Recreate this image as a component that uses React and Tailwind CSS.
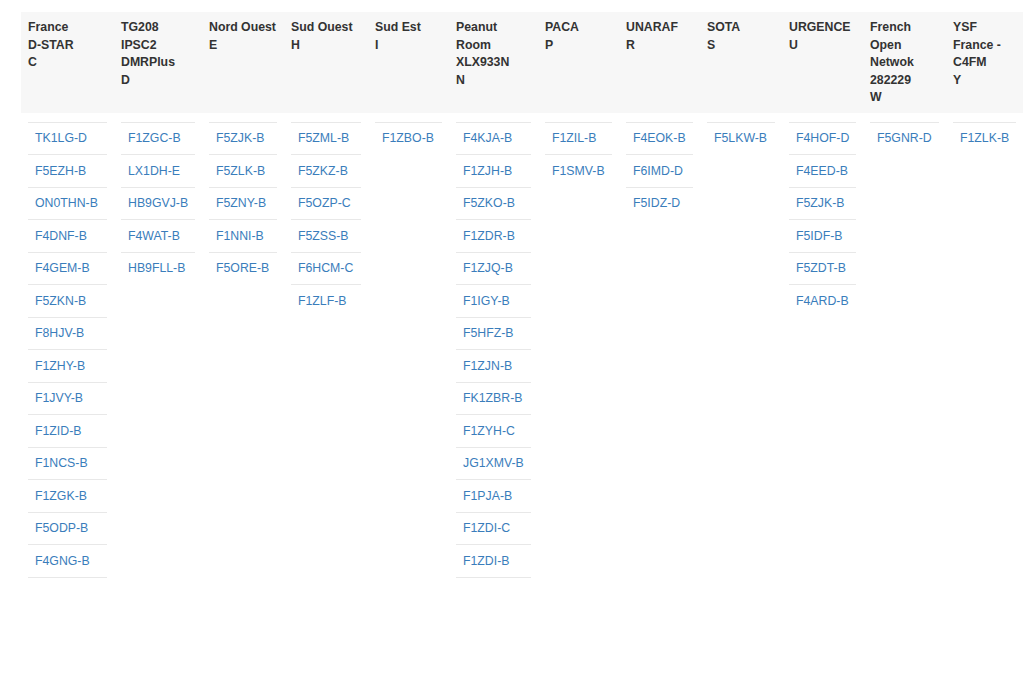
const columns = [
  { w: 'w-[93px]', title: ['France', 'D-STAR', 'C'], items: ['TK1LG-D', 'F5EZH-B', 'ON0THN-B', 'F4DNF-B', 'F4GEM-B', 'F5ZKN-B', 'F8HJV-B', 'F1ZHY-B', 'F1JVY-B', 'F1ZID-B', 'F1NCS-B', 'F1ZGK-B', 'F5ODP-B', 'F4GNG-B'] },
  { w: 'w-[88px]', title: ['TG208', 'IPSC2', 'DMRPlus', 'D'], items: ['F1ZGC-B', 'LX1DH-E', 'HB9GVJ-B', 'F4WAT-B', 'HB9FLL-B'] },
  { w: 'w-[82px]', title: ['Nord Ouest', 'E'], items: ['F5ZJK-B', 'F5ZLK-B', 'F5ZNY-B', 'F1NNI-B', 'F5ORE-B'] },
  { w: 'w-[84px]', title: ['Sud Ouest', 'H'], items: ['F5ZML-B', 'F5ZKZ-B', 'F5OZP-C', 'F5ZSS-B', 'F6HCM-C', 'F1ZLF-B'] },
  { w: 'w-[81px]', title: ['Sud Est', 'I'], items: ['F1ZBO-B'] },
  { w: 'w-[89px]', title: ['Peanut', 'Room', 'XLX933N', 'N'], items: ['F4KJA-B', 'F1ZJH-B', 'F5ZKO-B', 'F1ZDR-B', 'F1ZJQ-B', 'F1IGY-B', 'F5HFZ-B', 'F1ZJN-B', 'FK1ZBR-B', 'F1ZYH-C', 'JG1XMV-B', 'F1PJA-B', 'F1ZDI-C', 'F1ZDI-B'] },
  { w: 'w-[81px]', title: ['PACA', 'P'], items: ['F1ZIL-B', 'F1SMV-B'] },
  { w: 'w-[81px]', title: ['UNARAF', 'R'], items: ['F4EOK-B', 'F6IMD-D', 'F5IDZ-D'] },
  { w: 'w-[82px]', title: ['SOTA', 'S'], items: ['F5LKW-B'] },
  { w: 'w-[81px]', title: ['URGENCE', 'U'], items: ['F4HOF-D', 'F4EED-B', 'F5ZJK-B', 'F5IDF-B', 'F5ZDT-B', 'F4ARD-B'] },
  { w: 'w-[83px]', title: ['French', 'Open', 'Netwok', '282229', 'W'], items: ['F5GNR-D'] },
  { w: 'w-[77px]', title: ['YSF', 'France -', 'C4FM', 'Y'], items: ['F1ZLK-B'] },
];

function Column({ col }) {
  const closed = col.items.length >= 14;
  return (
    <div className={`${col.w} shrink-0`}>
      <div className="h-[101px] bg-[#f7f7f7] px-[7px] pt-[7px] text-[12.3px] font-bold leading-[17.6px] text-[#333] whitespace-nowrap">
        {col.title.map((line) => (
          <div key={line}>{line}</div>
        ))}
      </div>
      <div className="px-[7px] pt-[8.5px]">
        <div className={closed ? 'border-b border-[#e8e8e8]' : ''}>
          {col.items.map((item, i) => (
            <div
              key={item + i}
              className="h-[32.5px] border-t border-[#e8e8e8] px-[7px] flex items-center text-[12.3px] text-[#3a7dbb] whitespace-nowrap"
            >
              <a href="#">{item}</a>
            </div>
          ))}
        </div>
      </div>
    </div>
  );
}

export default function App() {
  return (
    <div className="w-[1024px] h-[683px] overflow-hidden bg-white" style={{ fontFamily: "'Liberation Sans', Arial, sans-serif" }}>
      <div className="flex pl-[21px] pt-[12px]">
        {columns.map((col) => (
          <Column key={col.title.join(' ')} col={col} />
        ))}
      </div>
    </div>
  );
}
